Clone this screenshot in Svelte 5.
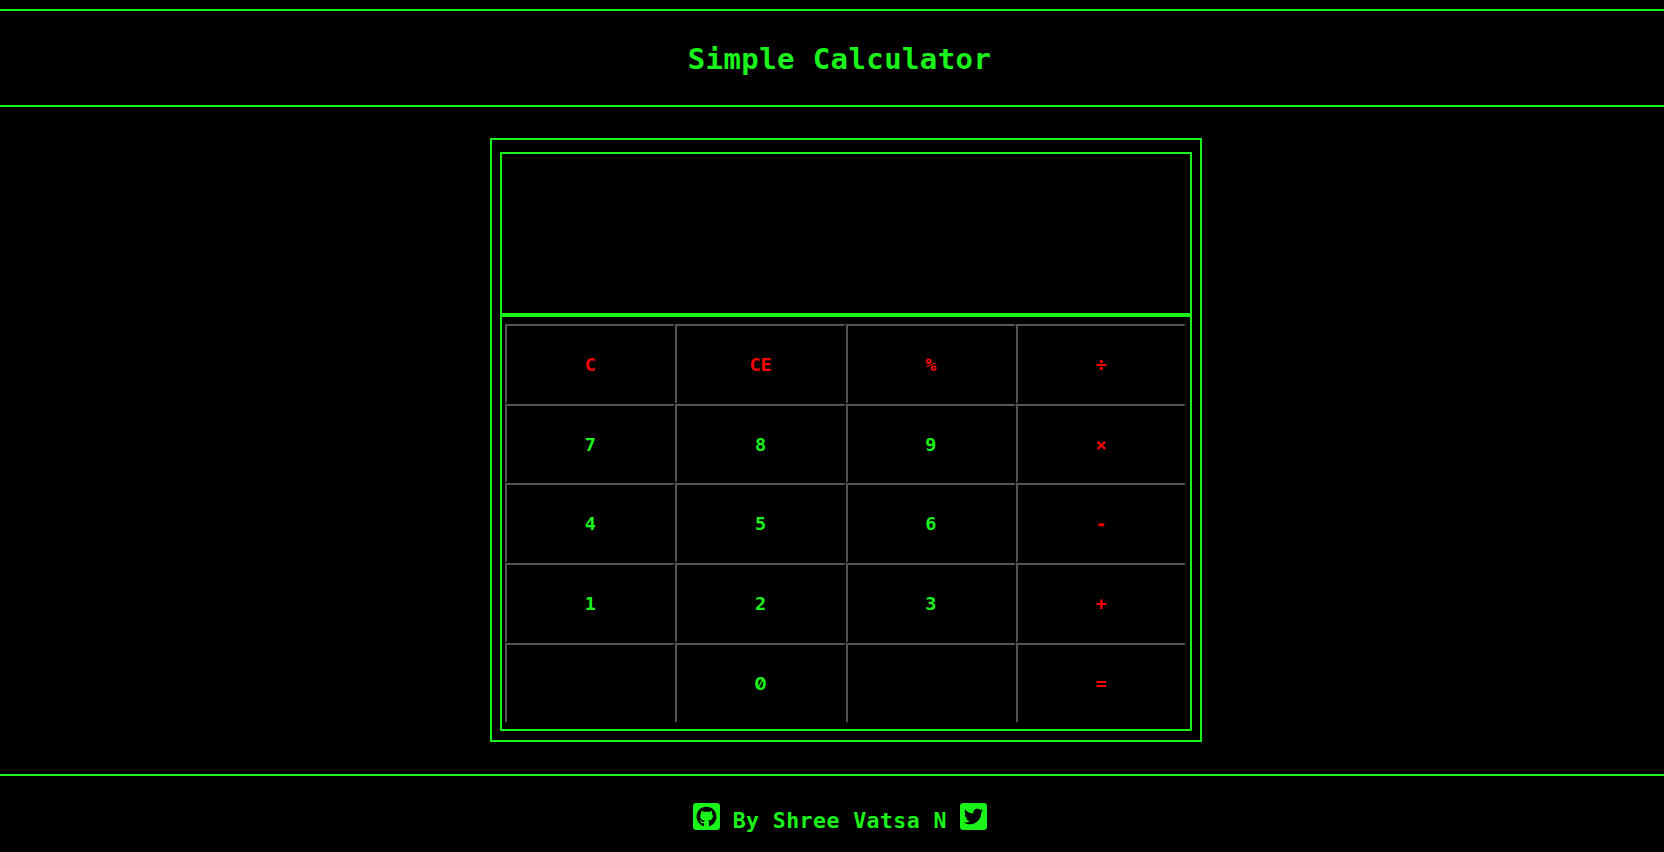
<script>
  const rows = [
    ['C', 'CE', '%', '÷'],
    ['7', '8', '9', '×'],
    ['4', '5', '6', '-'],
    ['1', '2', '3', '+'],
    ['', '0', '', '='],
  ];
  const keys = rows.flat();
  const isOperator = (key) => /^(C|CE|%|÷|×|-|\+|=)$/.test(key);

  let display = $state('');

  function evaluate(text) {
    const tokens = text.match(/[\d.]+|[%÷×+-]/g) ?? [];
    let total = Number(tokens[0] ?? 0);
    for (let i = 1; i < tokens.length - 1; i += 2) {
      const n = Number(tokens[i + 1]);
      if (tokens[i] === '+') total += n;
      if (tokens[i] === '-') total -= n;
      if (tokens[i] === '×') total *= n;
      if (tokens[i] === '÷') total /= n;
      if (tokens[i] === '%') total %= n;
    }
    return String(total);
  }

  function press(key) {
    if (key === 'C') display = '';
    else if (key === 'CE') display = display.slice(0, -1);
    else if (key === '=') display = evaluate(display);
    else display += key;
  }
</script>

<div class="page">
  <header><h1>Simple Calculator</h1></header>

  <main class="calculator">
    <div class="display">{display}</div>
    <div class="keys">
      {#each keys as key}
        <button class:operator={isOperator(key)} class:zero={key === '0'} onclick={() => press(key)}>{key}</button>
      {/each}
    </div>
  </main>

  <footer>
    <svg viewBox="0 32 448 448" aria-hidden="true"><path d="M400 32H48C21.5 32 0 53.5 0 80v352c0 26.5 21.5 48 48 48h352c26.5 0 48-21.5 48-48V80c0-26.5-21.5-48-48-48zM277.3 415.7c-8.4 1.5-11.5-3.7-11.5-8 0-5.4.2-33 .2-55.3 0-15.6-5.2-25.5-11.3-30.7 37-4.1 76-9.2 76-73.1 0-18.2-6.5-27.3-17.1-39 1.7-4.3 7.4-22-1.7-45-13.9-4.3-45.7 17.9-45.7 17.9-13.2-3.7-27.5-5.6-41.6-5.6-14.1 0-28.4 1.9-41.6 5.6 0 0-31.8-22.2-45.7-17.9-9.1 22.9-3.5 40.6-1.7 45-10.6 11.7-15.6 20.8-15.6 39 0 63.6 37.3 69 74.3 73.1-4.8 4.3-9.1 11.7-10.6 22.3-9.5 4.3-33.8 11.7-48.3-13.9-9.1-15.8-25.5-17.1-25.5-17.1-16.2-.2-1.1 10.2-1.1 10.2 10.8 5 18.4 24.2 18.4 24.2 9.7 29.7 56.1 19.7 56.1 19.7 0 13.9.2 36.5.2 40.6 0 4.3-3 9.5-11.5 8-66-22.1-112.2-84.9-112.2-158.3 0-91.8 70.2-161.5 162-161.5S388 165.6 388 257.4c.1 73.4-44.7 136.3-110.7 158.3z" /></svg>
    <span>By Shree Vatsa N</span>
    <svg viewBox="0 32 448 448" aria-hidden="true"><path d="M400 32H48C21.5 32 0 53.5 0 80v352c0 26.5 21.5 48 48 48h352c26.5 0 48-21.5 48-48V80c0-26.5-21.5-48-48-48zm-48.9 158.8c.2 2.8.2 5.7.2 8.5 0 86.7-66 186.6-186.6 186.6-37.2 0-71.7-10.8-100.7-29.4 5.3.6 10.4.8 15.8.8 30.7 0 58.9-10.4 81.4-28-28.8-.6-53-19.5-61.3-45.5 10.1 1.5 19.2 1.5 29.6-1.2-30-6.1-52.5-32.5-52.5-64.4v-.8c8.7 4.9 18.9 7.9 29.6 8.3a65.447 65.447 0 0 1-29.2-54.6c0-12.2 3.2-23.4 8.9-33.1 32.3 39.8 80.8 65.8 135.2 68.6-9.3-44.5 24-80.6 64-80.6 18.9 0 35.9 7.9 47.9 20.7 14.8-2.8 29-8.3 41.6-15.8-4.9 15.2-15.2 28-28.8 36.1 13.2-1.4 26-5.1 37.8-10.2-8.9 13.1-20.1 24.7-32.9 34z" /></svg>
  </footer>
</div>

<style>
  :global(body) {
    background: #000;
  }
  .page {
    --green: #1bf41b;
    display: flex;
    flex-direction: column;
    box-sizing: border-box;
    height: 852px;
    padding-top: 9px;
    overflow: hidden;
    background: #000;
    color: var(--green);
    font-family: Consolas, 'DejaVu Sans Mono', monospace;
    font-weight: 700;
  }
  header {
    box-sizing: border-box;
    height: 98px;
    padding-left: 15px;
    border-top: 2px solid var(--green);
    border-bottom: 2px solid var(--green);
    text-align: center;
  }
  h1 {
    margin: 0;
    font-size: 29px;
    line-height: 97px;
    letter-spacing: 0.4px;
  }
  .calculator {
    box-sizing: border-box;
    width: 712px;
    height: 604px;
    margin: 31px 0 32px 490px;
    padding: 12px 8px 9px;
    border: 2px solid var(--green);
  }
  .display {
    box-sizing: border-box;
    height: 163px;
    padding: 20px;
    border: 2px solid var(--green);
    font-size: 29px;
    text-align: right;
  }
  .keys {
    display: grid;
    grid-template-columns: repeat(4, 1fr);
    grid-template-rows: repeat(5, 1fr);
    box-sizing: border-box;
    height: 416px;
    padding: 7px 4px 6.3px 3px;
    border: 2px solid var(--green);
  }
  button {
    margin: 0;
    padding: 0.9px 0 0 0.4px;
    border: 2px solid;
    border-color: #555 #000 #000 #555;
    background: #000;
    color: var(--green);
    font: 700 18.5px Consolas, 'DejaVu Sans Mono', monospace;
  }
  .operator {
    color: #f00;
  }
  .zero {
    font: 700 18px Inter, sans-serif;
    font-feature-settings: 'zero';
  }
  footer {
    display: flex;
    justify-content: center;
    flex: 1;
    gap: 12.6px;
    padding: 27px 0 0 15.6px;
    border-top: 2px solid var(--green);
    font-size: 21.5px;
    line-height: 36px;
    letter-spacing: 0.45px;
    white-space: nowrap;
  }
  svg {
    width: 27px;
    height: 27px;
    fill: currentColor;
  }
</style>
